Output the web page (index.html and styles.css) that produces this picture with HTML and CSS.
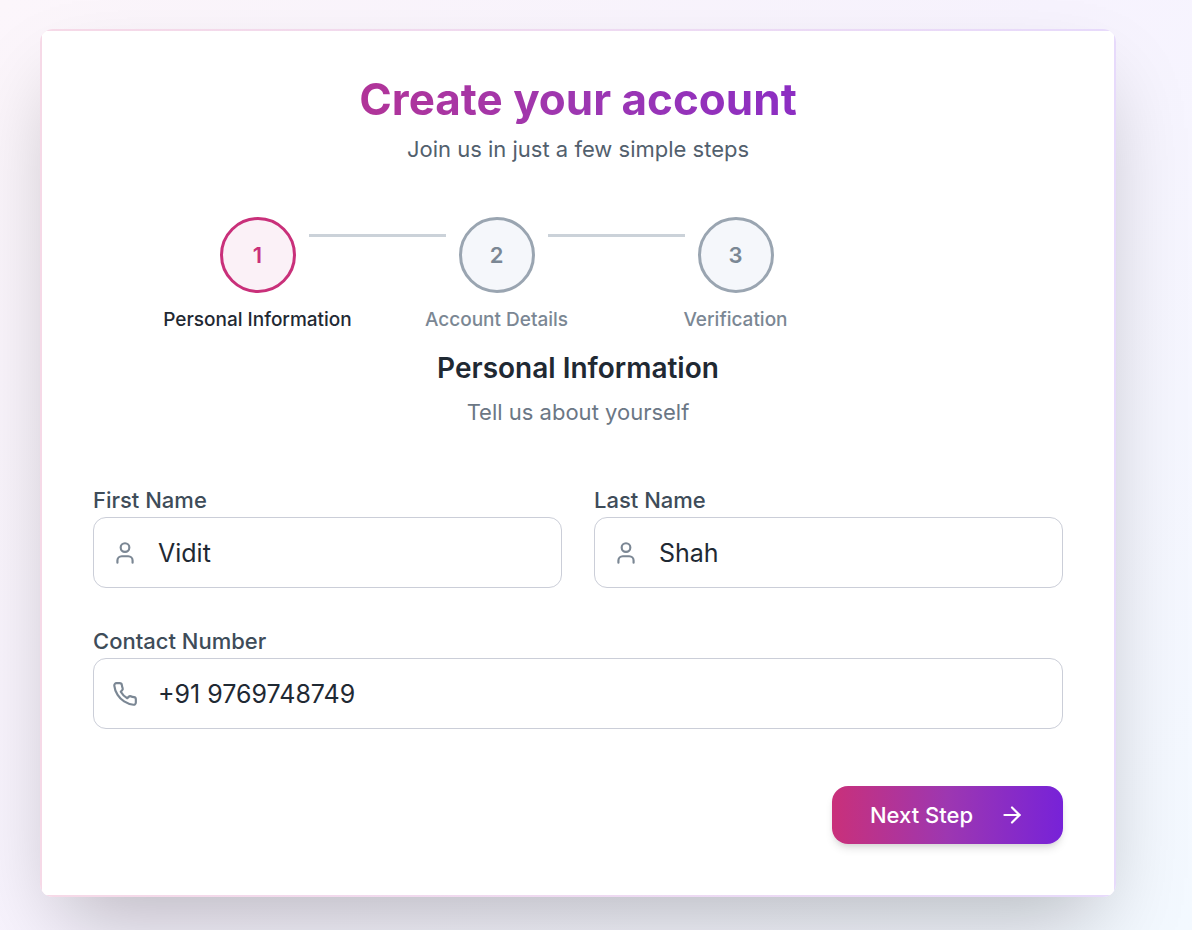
FILE: index.html
```html
<!DOCTYPE html>
<html lang="en">
<head>
<meta charset="utf-8">
<meta name="viewport" content="width=device-width, initial-scale=1">
<title>Create your account</title>
<link rel="stylesheet" href="styles.css">
</head>
<body>
<main class="page">
  <div class="card">
    <div class="card-body">
      <header class="intro">
        <h1 class="title">Create your account</h1>
        <p class="subtitle">Join us in just a few simple steps</p>
      </header>

      <ol class="steps">
        <li class="step step-current" aria-current="step">
          <div class="step-track"><span class="step-dot">1</span></div>
          <span class="step-label">Personal Information</span>
        </li>
        <li class="step">
          <div class="step-track"><span class="step-dot">2</span></div>
          <span class="step-label">Account Details</span>
        </li>
        <li class="step">
          <div class="step-track"><span class="step-dot">3</span></div>
          <span class="step-label">Verification</span>
        </li>
      </ol>

      <h2 class="section-title">Personal Information</h2>
      <p class="section-text">Tell us about yourself</p>

      <form class="form">
        <div class="field">
          <label class="label" for="first-name">First Name</label>
          <div class="control">
            <svg class="icon" viewBox="0 0 24 24" aria-hidden="true"><path d="M19 21v-2a4 4 0 0 0-4-4H9a4 4 0 0 0-4 4v2"/><circle cx="12" cy="7" r="4"/></svg>
            <input class="input" id="first-name" type="text" value="Vidit">
          </div>
        </div>
        <div class="field">
          <label class="label" for="last-name">Last Name</label>
          <div class="control">
            <svg class="icon" viewBox="0 0 24 24" aria-hidden="true"><path d="M19 21v-2a4 4 0 0 0-4-4H9a4 4 0 0 0-4 4v2"/><circle cx="12" cy="7" r="4"/></svg>
            <input class="input" id="last-name" type="text" value="Shah">
          </div>
        </div>
        <div class="field field-wide">
          <label class="label" for="contact">Contact Number</label>
          <div class="control">
            <svg class="icon" viewBox="0 0 24 24" aria-hidden="true"><path d="M22 16.92v3a2 2 0 0 1-2.18 2 19.79 19.79 0 0 1-8.63-3.07 19.5 19.5 0 0 1-6-6 19.79 19.79 0 0 1-3.07-8.67A2 2 0 0 1 4.11 2h3a2 2 0 0 1 2 1.72 12.84 12.84 0 0 0 .7 2.81 2 2 0 0 1-.45 2.11L8.09 9.91a16 16 0 0 0 6 6l1.27-1.27a2 2 0 0 1 2.11-.45 12.84 12.84 0 0 0 2.81.7A2 2 0 0 1 22 16.92z"/></svg>
            <input class="input" id="contact" type="tel" value="+91 9769748749">
          </div>
        </div>
        <div class="actions">
          <button class="next" type="button">
            Next Step
            <svg class="icon icon-light" viewBox="0 0 24 24" aria-hidden="true"><path d="M5 12h14"/><path d="m12 5 7 7-7 7"/></svg>
          </button>
        </div>
      </form>
    </div>
  </div>
</main>
</body>
</html>
```

FILE: styles.css
```css
* {
  box-sizing: border-box;
}

body {
  margin: 0;
  font-family: Inter, "Liberation Sans", sans-serif;
  color: #1f2933;
}

h1, h2, p, ol {
  margin: 0;
  padding: 0;
}

.page {
  min-height: 100vh;
  padding: 29px 76px 33px 40px;
  overflow: hidden;
  background: linear-gradient(135deg, #fcf6fb 0%, #f7f3fe 50%, #f3f9ff 100%);
}

.card {
  padding: 2px;
  border-radius: 13px;
  overflow: hidden;
  background: linear-gradient(90deg, #f6d9e7, #e7dafb);
  box-shadow: 0 40px 80px -19px rgba(0, 0, 0, 0.25);
}

.card-body {
  padding: 38px 51px 51px;
  background: #fff;
  text-align: center;
}

.title {
  font-size: 44px;
  line-height: 60px;
  font-weight: 700;
  color: transparent;
  background: linear-gradient(90deg, #c9307a, #9d37b1 50%, #7722d8);
  background-clip: text;
  -webkit-background-clip: text;
}

.subtitle {
  margin-top: 2px;
  font-size: 22px;
  line-height: 36px;
  color: #52606d;
}

.steps {
  display: grid;
  grid-template-columns: repeat(3, 1fr);
  margin: 50px 208px 0 45px;
  list-style: none;
}

.step {
  color: #7b8794;
}

.step-track {
  display: flex;
  gap: 13px;
}

.step-track::before,
.step-track::after {
  content: "";
  flex: 1;
  height: 3px;
  margin-top: 17px;
  background: #cbd2d9;
}

.step:first-child .step-track::before,
.step:last-child .step-track::after {
  visibility: hidden;
}

.step-dot {
  display: flex;
  align-items: center;
  justify-content: center;
  width: 76px;
  height: 76px;
  border: 3px solid #9aa5b1;
  border-radius: 50%;
  background: #f5f7fb;
  font-size: 22px;
  font-weight: 600;
}

.step-label {
  display: block;
  margin-top: 13px;
  font-size: 19px;
  line-height: 27px;
  font-weight: 500;
}

.step-current .step-dot {
  border-color: #c9307a;
  background: #fbf1f7;
  color: #c9307a;
}

.step-current .step-label {
  color: #1f2933;
}

.section-title {
  margin-top: 15px;
  font-size: 28px;
  line-height: 40px;
  font-weight: 600;
}

.section-text {
  margin-top: 8px;
  font-size: 22px;
  line-height: 32px;
  color: #6b7785;
}

.form {
  display: grid;
  grid-template-columns: repeat(2, minmax(0, 1fr));
  gap: 39px 32px;
  margin-top: 58px;
  text-align: left;
}

.field-wide,
.actions {
  grid-column: 1 / -1;
}

.label {
  display: block;
  margin-bottom: 3px;
  font-size: 22px;
  line-height: 28px;
  font-weight: 500;
  color: #3e4c59;
}

.control {
  display: flex;
  align-items: center;
  gap: 20px;
  height: 71px;
  padding: 0 18px;
  border: 1px solid #cbced8;
  border-radius: 13px;
}

.icon {
  flex: none;
  width: 26px;
  height: 26px;
  fill: none;
  stroke: #7b8794;
  stroke-width: 2;
  stroke-linecap: round;
  stroke-linejoin: round;
}

.icon-light {
  stroke: #fff;
}

.input {
  flex: 1;
  min-width: 0;
  padding: 0;
  border: 0;
  outline: 0;
  background: transparent;
  font: inherit;
  font-size: 25px;
  line-height: 36px;
  color: #1f2933;
}

.actions {
  display: flex;
  justify-content: flex-end;
  padding-top: 18px;
}

.next {
  display: flex;
  align-items: center;
  gap: 26px;
  height: 58px;
  padding: 0 38px;
  border: 0;
  border-radius: 16px;
  background: linear-gradient(90deg, #c9307a, #9d37b1 50%, #7722d8);
  box-shadow: 0 6px 10px -2px rgba(0, 0, 0, 0.12), 0 3px 6px -3px rgba(0, 0, 0, 0.12);
  font: inherit;
  font-size: 22px;
  font-weight: 500;
  color: #fff;
}
```
